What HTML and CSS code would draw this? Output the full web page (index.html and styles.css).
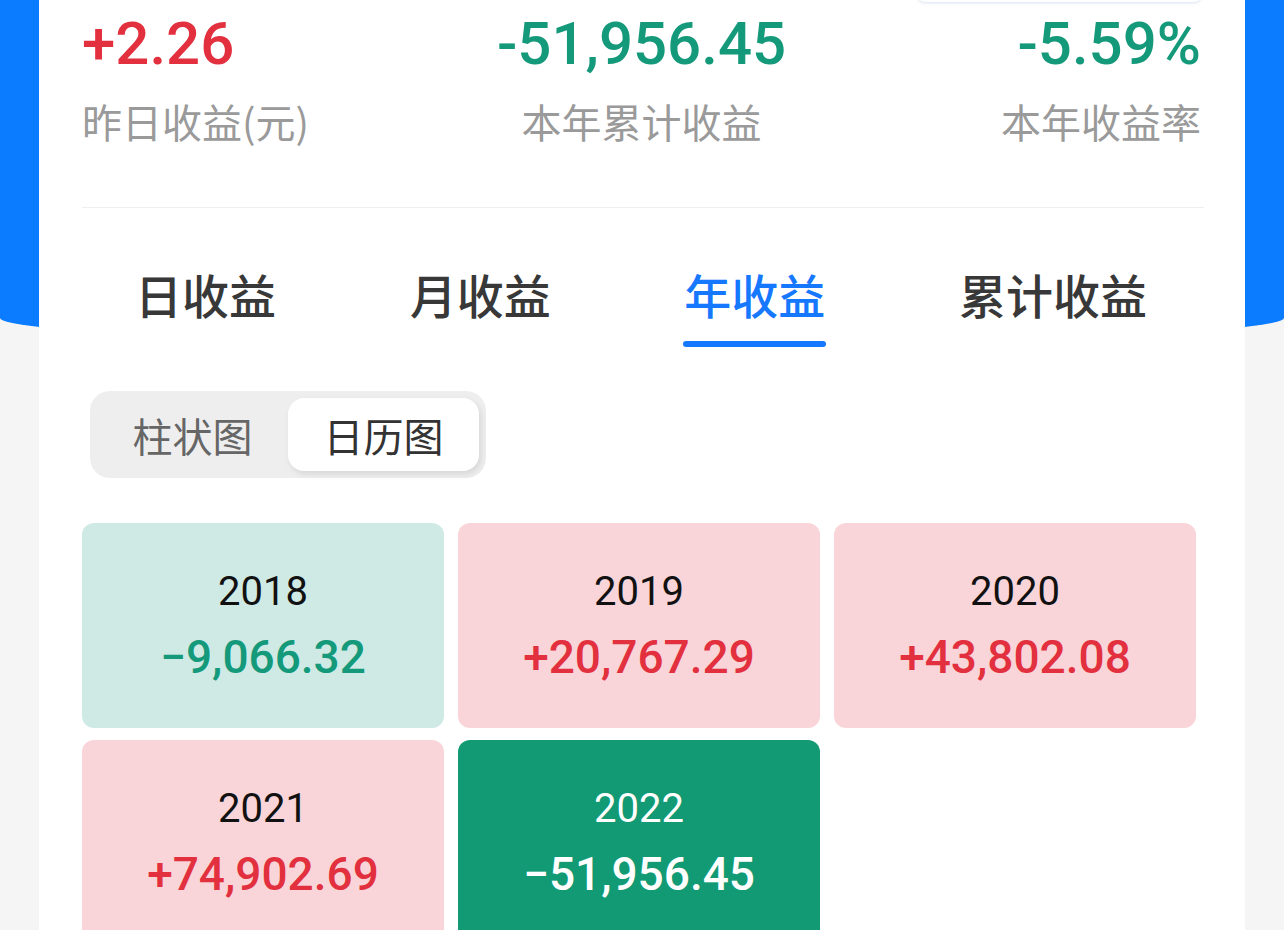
FILE: index.html
```html
<!DOCTYPE html>
<html lang="zh-CN">
<head>
<meta charset="utf-8">
<title>年收益</title>
<link rel="stylesheet" href="styles.css">
</head>
<body>
<div class="page">
  <div class="hero"></div>
  <main class="card">
    <div class="chip"></div>
    <section class="stats">
      <div class="stat stat-left">
        <div class="value up">+2.26</div>
        <div class="label">昨日收益(元)</div>
      </div>
      <div class="stat stat-center">
        <div class="value down">-51,956.45</div>
        <div class="label">本年累计收益</div>
      </div>
      <div class="stat stat-right">
        <div class="value down">-5.59%</div>
        <div class="label">本年收益率</div>
      </div>
    </section>

    <nav class="tabs">
      <div class="tab">日收益</div>
      <div class="tab">月收益</div>
      <div class="tab active">年收益</div>
      <div class="tab">累计收益</div>
    </nav>

    <div class="segment">
      <div class="seg">柱状图</div>
      <div class="seg on">日历图</div>
    </div>

    <section class="grid">
      <div class="tile tile-lgreen"><div class="year">2018</div><div class="amt down">−9,066.32</div></div>
      <div class="tile tile-pink"><div class="year">2019</div><div class="amt up">+20,767.29</div></div>
      <div class="tile tile-pink"><div class="year">2020</div><div class="amt up">+43,802.08</div></div>
      <div class="tile tile-pink"><div class="year">2021</div><div class="amt up">+74,902.69</div></div>
      <div class="tile tile-dgreen"><div class="year">2022</div><div class="amt">−51,956.45</div></div>
    </section>
  </main>
</div>
</body>
</html>
```

FILE: styles.css
```css
* { box-sizing: border-box; }
html, body { margin: 0; padding: 0; }
body {
  background: #f5f5f5;
  font-family: Roboto, "Noto Sans CJK SC", sans-serif;
  width: 1284px;
  height: 930px;
  overflow: hidden;
}
.page {
  position: relative;
  height: 930px;
}
.hero {
  position: absolute;
  top: 0;
  left: 0;
  right: 0;
  height: 344px;
  background: #0b7bff;
  border-radius: 0 0 50% 50% / 0 0 26px 26px;
}
.card {
  position: relative;
  margin: 0 39px;
  background: #ffffff;
  min-height: 930px;
  padding: 9px 41px 0 43px;
}
.chip {
  position: absolute;
  top: -60px;
  left: 878px;
  width: 285px;
  height: 62px;
  background: #fff;
  border-radius: 8px;
  box-shadow: 0 1px 3px rgba(40, 90, 170, 0.18);
}
.stats {
  display: grid;
  grid-template-columns: 1fr 1fr 1fr;
  padding-bottom: 61px;
  border-bottom: 1px solid #eeeeee;
  padding-right: 3px;
}
.stat-left { text-align: left; }
.stat-center { text-align: center; }
.stat-right { text-align: right; }
.value {
  font-size: 60px;
  line-height: 70px;
  font-weight: 500;
  letter-spacing: 0;
}
.label {
  margin-top: 17px;
  font-size: 40px;
  line-height: 50px;
  color: #9a9a9a;
  font-family: "Noto Sans CJK SC", sans-serif;
}
.up { color: #e2303f; }
.down { color: #14997a; }

.tabs {
  display: flex;
  justify-content: space-between;
  padding: 55px 57px 0 53px;
}
.tab {
  position: relative;
  font-family: "Noto Sans CJK SC", sans-serif;
  font-size: 47px;
  line-height: 62px;
  font-weight: 500;
  color: #383838;
  padding-bottom: 22px;
}
.tab.active { color: #1677ff; }
.tab.active::after {
  content: "";
  position: absolute;
  left: -1px;
  right: -1px;
  bottom: 0;
  height: 6px;
  border-radius: 3px;
  background: #1677ff;
}

.segment {
  display: inline-flex;
  margin: 44px 0 0 8px;
  padding: 7px;
  background: #eeeeee;
  border-radius: 20px;
}
.seg {
  width: 191px;
  height: 73px;
  display: flex;
  align-items: center;
  justify-content: center;
  font-family: "Noto Sans CJK SC", sans-serif;
  font-size: 40px;
  color: #666666;
  border-radius: 16px;
}
.seg.on {
  background: #ffffff;
  color: #333333;
  box-shadow: 2px 3px 6px rgba(0, 0, 0, 0.10);
}

.grid {
  display: grid;
  grid-template-columns: repeat(3, 362px);
  column-gap: 14px;
  row-gap: 12px;
  margin-top: 45px;
}
.tile {
  height: 205px;
  border-radius: 12px;
  display: flex;
  flex-direction: column;
  align-items: center;
  justify-content: center;
  gap: 12px;
}
.tile-lgreen { background: #cfeae5; }
.tile-pink { background: #f9d5d9; }
.tile-dgreen { background: #129a74; color: #ffffff; }
.year {
  font-size: 40px;
  line-height: 50px;
  color: #111111;
}
.tile-dgreen .year { color: #ffffff; }
.amt {
  font-size: 46px;
  line-height: 56px;
  font-weight: 500;
}
```
